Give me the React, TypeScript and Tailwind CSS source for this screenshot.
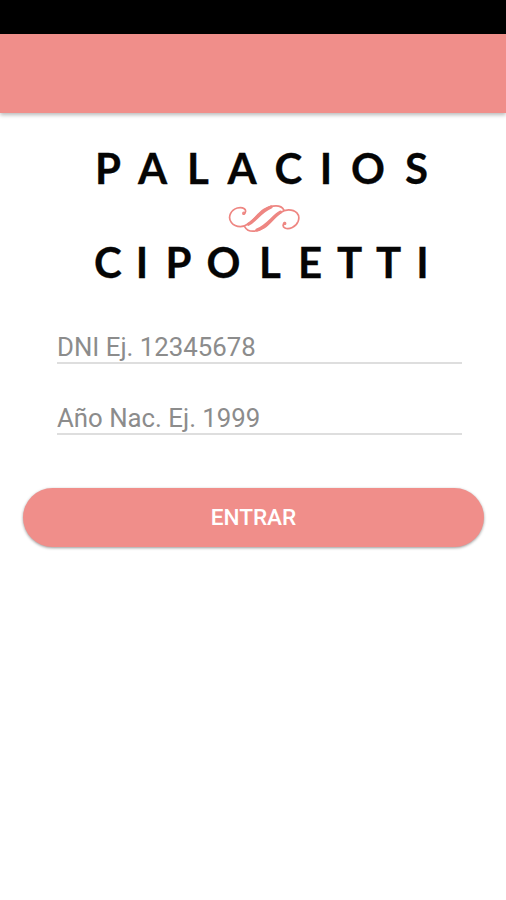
interface Glyph {
  char: string;
  x: number;
}

const TOP_LINE: Glyph[] = [
  { char: "P", x: 108 },
  { char: "A", x: 152.5 },
  { char: "L", x: 198 },
  { char: "A", x: 242 },
  { char: "C", x: 288.5 },
  { char: "I", x: 326 },
  { char: "O", x: 368 },
  { char: "S", x: 416.5 },
];

const BOTTOM_LINE: Glyph[] = [
  { char: "C", x: 108 },
  { char: "I", x: 142 },
  { char: "P", x: 178.5 },
  { char: "O", x: 223.5 },
  { char: "L", x: 270 },
  { char: "E", x: 310 },
  { char: "T", x: 349.5 },
  { char: "T", x: 388.5 },
  { char: "I", x: 422.5 },
];

function LogoLine({ glyphs, y }: { glyphs: Glyph[]; y: number }) {
  return (
    <text
      x={glyphs.map((glyph) => glyph.x).join(" ")}
      y={y}
      textAnchor="middle"
      className="fill-[#050505] stroke-[#050505] stroke-[0.3px] font-['Lato',sans-serif] text-[42px] font-bold"
    >
      {glyphs.map((glyph) => glyph.char).join("")}
    </text>
  );
}

function Logo() {
  return (
    <svg viewBox="0 0 506 180" className="block h-[180px] w-full shrink-0" role="img" aria-label="Palacios Cipoletti">
      <LogoLine glyphs={TOP_LINE} y={71} />
      <g transform="translate(220 85)" fill="none" stroke="#ee8682" strokeLinecap="round">
        <path
          d="M23.5 16.2C25.8 14.8 26.4 12.4 24.3 10.8C21 8.4 13.5 9.6 10.5 15.6C7.5 22 12.5 28.6 20.5 28.6C33.5 28.6 38 7.8 56 7.8C59.5 7.8 62.5 9.2 63.8 11.8"
          strokeWidth="1.7"
        />
        <path
          d="M65 24.6C62.5 26 62.4 28.8 65 30C69 31.8 76 29 78.2 23.2C80.6 16.4 75.5 11.8 68.5 11.8C55 11.8 50 33.2 33 33.2C29.4 33.2 26.2 31.4 24.8 28.8"
          strokeWidth="1.7"
        />
        <path d="M28.5 26.2C36 22 41 13 51 9M60.5 14.2C52 19 47 28.5 37 32" strokeWidth="3.2" />
        <circle cx="23.8" cy="15.2" r="1.1" strokeWidth="1.3" />
        <circle cx="64.7" cy="25.6" r="1.1" strokeWidth="1.3" />
      </g>
      <LogoLine glyphs={BOTTOM_LINE} y={165} />
    </svg>
  );
}

function Field({ placeholder }: { placeholder: string }) {
  return (
    <input
      type="text"
      placeholder={placeholder}
      className="block h-[37px] w-full border-b-2 border-[#dedede] bg-transparent pt-[5px] font-['Roboto',sans-serif] text-[25.8px] leading-[30px] outline-none placeholder:text-[#8c8c8c]"
    />
  );
}

export default function App() {
  return (
    <div className="flex h-[900px] w-full flex-col overflow-hidden bg-white">
      <div className="h-[34px] shrink-0 bg-black" />
      <header className="h-[79px] shrink-0 bg-[#f08e8a] shadow-[0_2px_4px_rgba(0,0,0,0.28)]" />
      <main className="flex flex-col">
        <Logo />
        <form className="flex flex-col" onSubmit={(e) => e.preventDefault()}>
          <div className="ml-[57px] mr-[44px] mt-[34px] flex flex-col gap-[34px]">
            <Field placeholder="DNI Ej. 12345678" />
            <Field placeholder="Año Nac. Ej. 1999" />
          </div>
          <button
            type="submit"
            className="ml-[23px] mr-[22px] mt-[53px] h-[59px] rounded-full bg-[#f08e8a] font-['Roboto',sans-serif] text-[22.6px] font-medium text-white shadow-[0_1px_3px_rgba(0,0,0,0.4)]"
          >
            ENTRAR
          </button>
        </form>
      </main>
    </div>
  );
}
